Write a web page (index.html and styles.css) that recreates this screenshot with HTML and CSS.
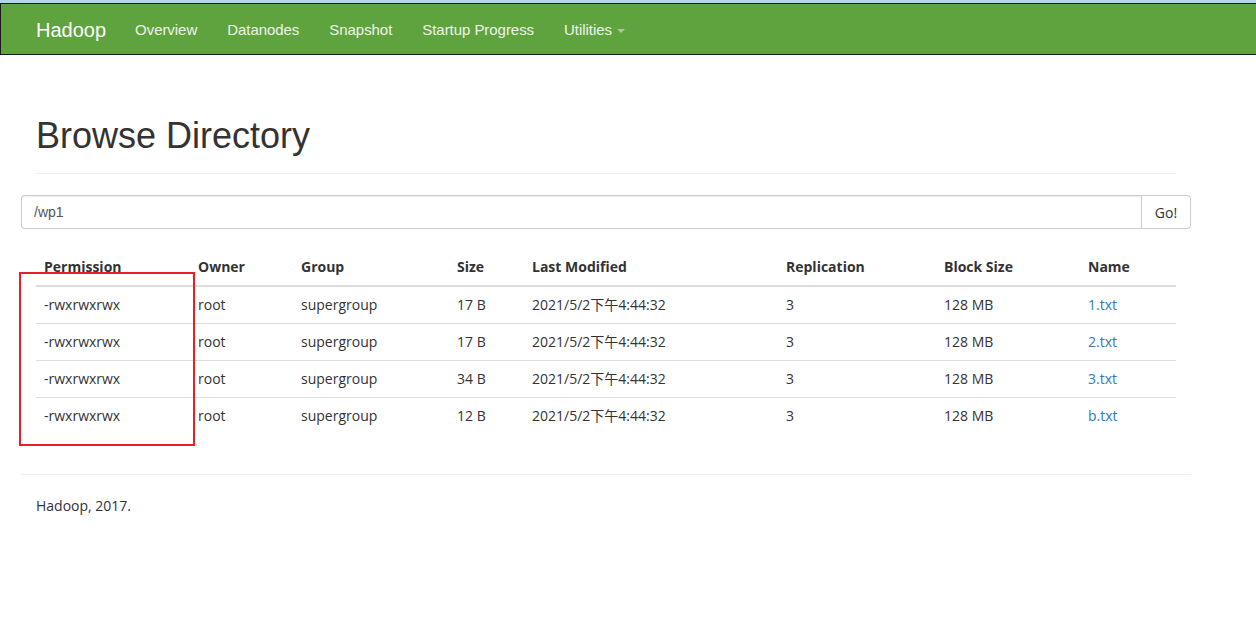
FILE: index.html
```html
<!DOCTYPE html>
<html>
<head>
<meta charset="utf-8">
<title>Browsing HDFS</title>
<link rel="stylesheet" href="styles.css">
</head>
<body>
<div class="topstrip"></div>
<header class="navbar">
  <div class="nav-inner">
    <a class="brand">Hadoop</a>
    <ul class="nav">
      <li><a>Overview</a></li>
      <li><a>Datanodes</a></li>
      <li><a>Snapshot</a></li>
      <li><a>Startup Progress</a></li>
      <li><a>Utilities <span class="caret"></span></a></li>
    </ul>
  </div>
</header>
<main class="container">
  <div class="page-header"><h1>Browse Directory</h1></div>
  <div class="input-group">
    <input class="form-control" type="text" value="/wp1">
    <button class="btn">Go!</button>
  </div>
  <table class="table">
    <thead>
      <tr><th class="c1">Permission</th><th class="c2">Owner</th><th class="c3">Group</th><th class="c4">Size</th><th class="c5">Last Modified</th><th class="c6">Replication</th><th class="c7">Block Size</th><th>Name</th></tr>
    </thead>
    <tbody>
      <tr><td>-rwxrwxrwx</td><td>root</td><td>supergroup</td><td>17 B</td><td>2021/5/2下午4:44:32</td><td>3</td><td>128 MB</td><td><a>1.txt</a></td></tr>
      <tr><td>-rwxrwxrwx</td><td>root</td><td>supergroup</td><td>17 B</td><td>2021/5/2下午4:44:32</td><td>3</td><td>128 MB</td><td><a>2.txt</a></td></tr>
      <tr><td>-rwxrwxrwx</td><td>root</td><td>supergroup</td><td>34 B</td><td>2021/5/2下午4:44:32</td><td>3</td><td>128 MB</td><td><a>3.txt</a></td></tr>
      <tr><td>-rwxrwxrwx</td><td>root</td><td>supergroup</td><td>12 B</td><td>2021/5/2下午4:44:32</td><td>3</td><td>128 MB</td><td><a>b.txt</a></td></tr>
    </tbody>
  </table>
  <hr class="footer-rule">
  <footer class="footer">Hadoop, 2017.</footer>
</main>
<div class="highlight"></div>
</body>
</html>
```
FILE: styles.css
```css
html, body {
  margin: 0;
  padding: 0;
  background: #fff;
}
body {
  font-family: "Open Sans", "Noto Sans CJK SC", sans-serif;
  font-size: 14px;
  line-height: 20px;
  color: #333;
  position: relative;
}
.topstrip {
  height: 3px;
  background: #afd9e6;
}
.navbar {
  background: #5fa33e;
  border-top: 1px solid #1a1a1a;
  border-bottom: 1px solid #1a1a1a;
  border-left: 1px solid #1a1a1a;
  height: 50px;
}
.nav-inner {
  display: flex;
  align-items: center;
  height: 50px;
  padding-left: 20px;
  padding-top: 2px;
  box-sizing: border-box;
  font-family: "Liberation Sans", Arial, sans-serif;
}
.brand {
  color: #fff;
  font-size: 20px;
  padding: 0 14px 0 15px;
  line-height: 48px;
}
.nav {
  display: flex;
  list-style: none;
  margin: 0;
  padding: 0;
}
.nav a {
  display: block;
  color: #eef3ea;
  font-size: 15px;
  letter-spacing: -0.05px;
  padding: 0 15px;
  line-height: 48px;
}
.caret {
  display: inline-block;
  width: 0;
  height: 0;
  margin-left: 1px;
  vertical-align: middle;
  border-top: 4px solid #a9c99a;
  border-left: 4px solid transparent;
  border-right: 4px solid transparent;
}
.container {
  width: 1170px;
  box-sizing: border-box;
  margin-left: 21px;
  padding: 0 15px;
}
.page-header {
  margin: 61px 0 21px;
  padding-bottom: 17px;
  border-bottom: 1px solid #eee;
}
.page-header h1 {
  margin: 0;
  font-family: "Liberation Sans", Arial, sans-serif;
  font-weight: 400;
  font-size: 36px;
  line-height: 40px;
  color: #333;
}
.input-group {
  display: flex;
  margin: 0 -15px 20px;
  height: 34px;
}
.form-control {
  flex: 1;
  box-sizing: border-box;
  height: 34px;
  border: 1px solid #ccc;
  border-right: none;
  border-radius: 4px 0 0 4px;
  padding: 6px 12px;
  font-family: "Liberation Sans", Arial, sans-serif;
  font-size: 14px;
  color: #555;
  box-shadow: inset 0 1px 1px rgba(0,0,0,.075);
  outline: none;
}
.btn {
  width: 50px;
  box-sizing: border-box;
  height: 34px;
  border: 1px solid #ccc;
  border-radius: 0 4px 4px 0;
  background: #fff;
  font-family: "Open Sans", sans-serif;
  font-size: 14px;
  color: #333;
  padding: 0;
}
.table {
  width: 100%;
  border-collapse: collapse;
}
.table th {
  text-align: left;
  font-weight: 700;
  padding: 8px;
  border-bottom: 2px solid #ddd;
}
.table td {
  padding: 8px;
  border-top: 1px solid #ddd;
}
.table tbody tr:first-child td {
  border-top: none;
}
.c1 { width: 138px; }
.c2 { width: 87px; }
.c3 { width: 140px; }
.c4 { width: 59px; }
.c5 { width: 238px; }
.c6 { width: 142px; }
.c7 { width: 128px; }
.table a {
  color: #337ab7;
  text-decoration: none;
}
.footer-rule {
  margin: 40px -15px 0;
  border: 0;
  border-top: 1px solid #eee;
}
.footer {
  padding: 21px 0;
}
.highlight {
  position: absolute;
  left: 19px;
  top: 272px;
  width: 172px;
  height: 170px;
  border: 2px solid #e5202a;
}
```
